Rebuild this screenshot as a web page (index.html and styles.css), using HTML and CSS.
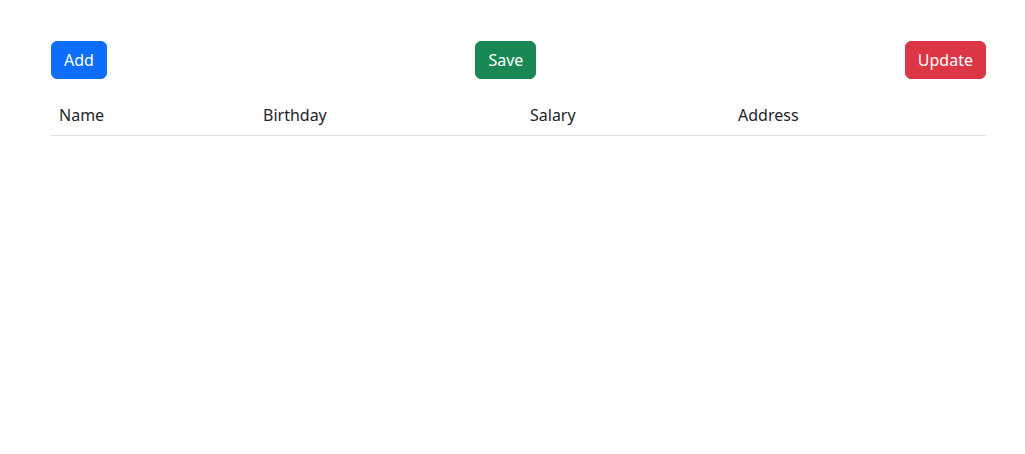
FILE: index.html
```html
<!DOCTYPE html>
<html lang="en">
<head>
<meta charset="utf-8">
<title>Employees</title>
<link rel="stylesheet" href="styles.css">
</head>
<body>
<main class="page">
  <div class="toolbar">
    <button class="btn btn-primary">Add</button>
    <button class="btn btn-success">Save</button>
    <button class="btn btn-danger">Update</button>
  </div>
  <table class="table">
    <colgroup>
      <col class="c-name">
      <col class="c-birthday">
      <col class="c-salary">
      <col>
    </colgroup>
    <thead>
      <tr>
        <th>Name</th>
        <th>Birthday</th>
        <th>Salary</th>
        <th>Address</th>
      </tr>
    </thead>
    <tbody></tbody>
  </table>
</main>
</body>
</html>
```
FILE: styles.css
```css
* { box-sizing: border-box; }
html, body {
  margin: 0;
  background: #fff;
  font-family: "Noto Sans", "Segoe UI", "Liberation Sans", sans-serif;
  font-size: 16px;
  line-height: 1.5;
  color: #212529;
}
.page {
  padding: 41px 39px 0 51px;
}
.toolbar {
  display: flex;
  justify-content: space-between;
  align-items: center;
}
.btn {
  font-family: inherit;
  font-size: 16px;
  line-height: 24px;
  padding: 6px 12px;
  border: 1px solid transparent;
  border-radius: 6px;
  color: #fff;
  cursor: pointer;
}
.btn-primary { background: #0d6efd; border-color: #0d6efd; }
.btn-success { background: #198754; border-color: #198754; }
.btn-danger { background: #dc3545; border-color: #dc3545; }
.table {
  width: 100%;
  margin-top: 16px;
  border-collapse: collapse;
  table-layout: fixed;
}
.c-name { width: 204px; }
.c-birthday { width: 267px; }
.c-salary { width: 208px; }
.table th {
  text-align: left;
  font-weight: 400;
  padding: 8px;
  line-height: 24px;
  border-bottom: 1px solid #dee2e6;
}
```
